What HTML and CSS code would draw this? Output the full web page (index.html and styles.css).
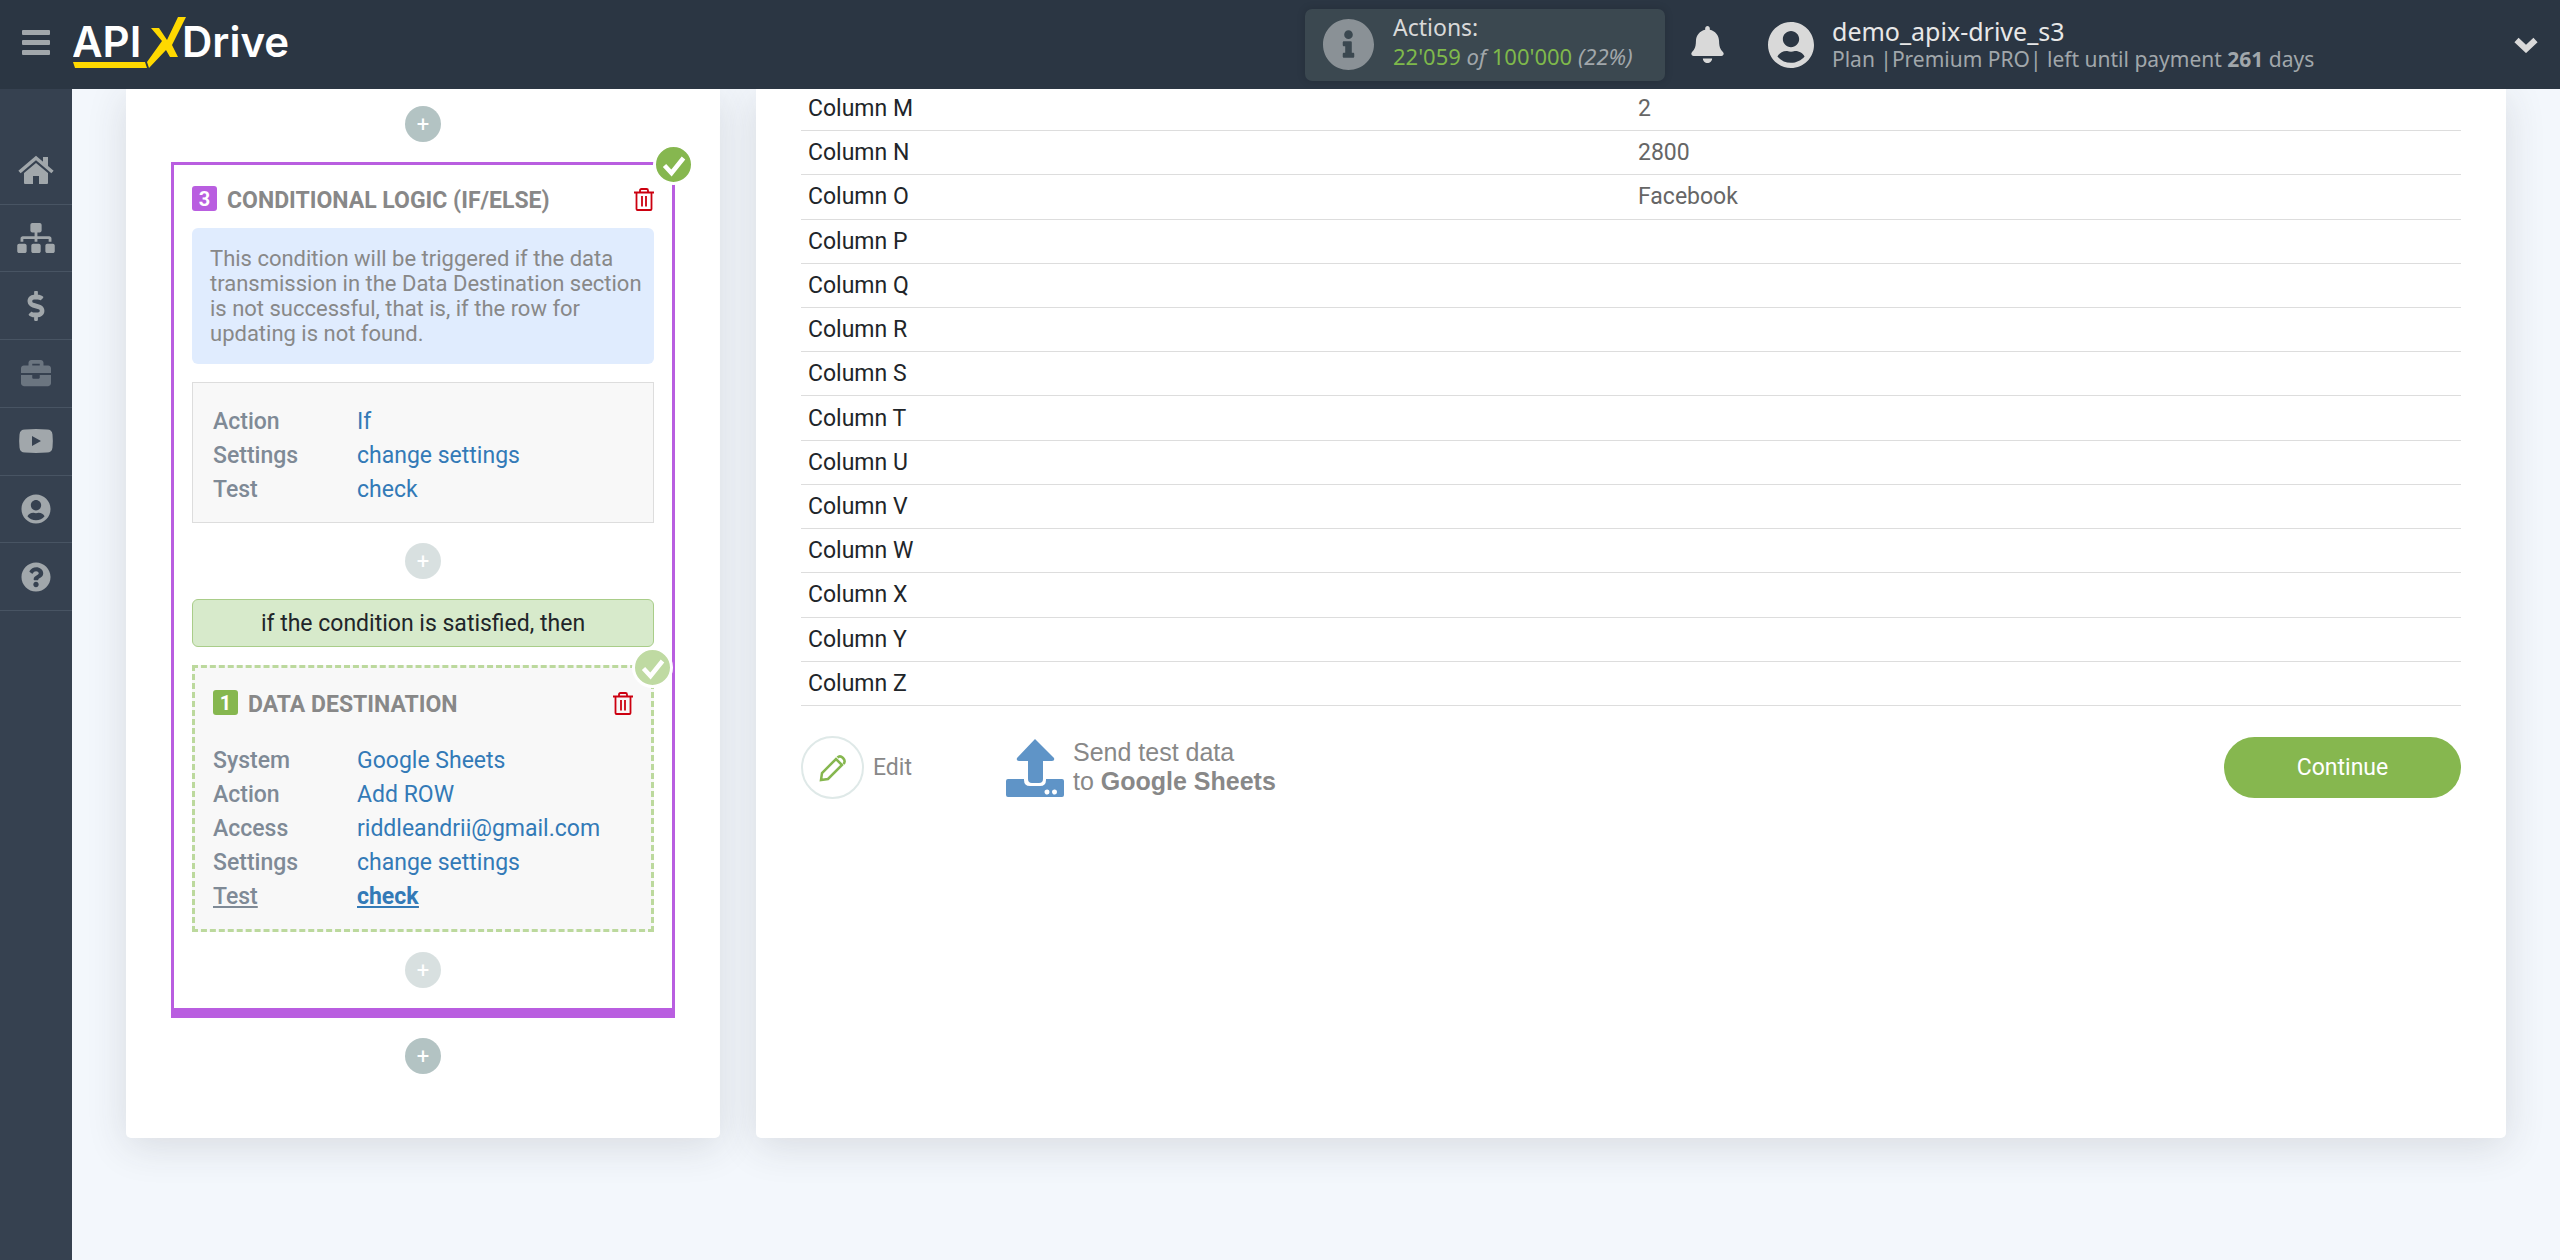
FILE: index.html
```html
<!DOCTYPE html>
<html lang="en">
<head>
<meta charset="utf-8">
<title>ApiX-Drive</title>
<link rel="stylesheet" href="styles.css">
</head>
<body>
<svg class="sprite" aria-hidden="true">
  <symbol id="i-check" viewBox="0 0 24 24"><path d="M2.500 12.500l7 7.500L21.500 5" fill="none" stroke="currentColor" stroke-width="4.500"/></symbol>
  <symbol id="i-trash" viewBox="0 0 20 24"><path d="M0 5.500h20M6 5V3.500q0-1.500 1.500-1.500h5q1.500 0 1.500 1.500V5M2.500 6v16q0 1 1 1h13q1 0 1-1V6M8 9v10.500M12 9v10.500" fill="none" stroke="currentColor" stroke-width="1.800"/></symbol>
  <symbol id="i-user" viewBox="0 0 496 512"><path d="M248 8C111 8 0 119 0 256s111 248 248 248 248-111 248-248S385 8 248 8zm0 96c48.600 0 88 39.400 88 88s-39.400 88-88 88-88-39.400-88-88 39.400-88 88-88zm0 344c-58.700 0-111.300-26.600-146.500-68.200 18.800-35.400 55.600-59.800 98.500-59.800 2.400 0 4.800.4 7.100 1.100 13 4.200 26.600 6.900 40.900 6.900 14.300 0 28-2.700 40.900-6.900 2.300-.7 4.700-1.100 7.100-1.100 42.900 0 79.700 24.400 98.500 59.800C359.300 421.400 306.700 448 248 448z"/></symbol>
</svg>

<header class="topbar">
  <button class="menu" aria-label="Menu"><span></span><span></span><span></span></button>
  <a class="logo" href="#" aria-label="ApiX-Drive">
    <svg viewBox="0 0 224 56" width="224" height="56">
      <text class="logo-text" x="-1" y="40">API</text>
      <text class="logo-text" x="109" y="40">Drive</text>
      <path class="logo-mark" d="M78 11h8l8 12L105 0h8L99 28l6 12h-8l-4-7L76 51l-2-6L89 24zM0 45h72l2 6H2z"/>
    </svg>
  </a>
  <div class="actions">
    <svg class="actions-icon" viewBox="8 8 496 496"><path d="M256 8C119 8 8 119 8 256s111 248 248 248 248-111 248-248S393 8 256 8zm0 110c23 0 42 19 42 42s-19 42-42 42-42-19-42-42 19-42 42-42zm56 254c0 7-5 12-12 12h-88c-7 0-12-5-12-12v-24c0-7 5-12 12-12h12v-64h-12c-7 0-12-5-12-12v-24c0-7 5-12 12-12h64c7 0 12 5 12 12v100h12c7 0 12 5 12 12z"/></svg>
    <div class="actions-body">
      <div class="actions-title">Actions:</div>
      <div class="actions-count"><b>22'059</b> <i>of</i> <b>100'000</b> <i>(22%)</i></div>
    </div>
  </div>
  <button class="bell" aria-label="Notifications">
    <svg viewBox="0 0 448 512"><path d="M224 512c35.320 0 63.970-28.650 63.970-64H160.030c0 35.350 28.650 64 63.970 64zm215.390-149.710c-19.320-20.760-55.470-51.990-55.470-154.290 0-77.700-54.480-139.900-127.940-155.160V32c0-17.670-14.320-32-31.980-32s-31.980 14.330-31.980 32v20.840C118.560 68.100 64.080 130.300 64.080 208c0 102.300-36.150 133.530-55.470 154.290-6 6.450-8.660 14.160-8.610 21.710.11 16.400 12.980 32 32.100 32h383.800c19.120 0 32-15.600 32.100-32 .05-7.550-2.610-15.270-8.610-21.710z"/></svg>
  </button>
  <div class="account">
    <svg><use href="#i-user"/></svg>
    <div>
      <div class="account-name">demo_apix-drive_s3</div>
      <div class="account-plan">Plan |Premium PRO| left until payment <b>261</b> days</div>
    </div>
  </div>
  <button class="expand" aria-label="Account menu">
    <svg viewBox="0 0 24 16"><path d="M2.500 3l9.500 9 9.500-9" fill="none" stroke="currentColor" stroke-width="6"/></svg>
  </button>
</header>

<div class="shell">
  <nav class="sidebar">
    <a href="#" aria-label="Home"><svg viewBox="0 0 36 28"><path d="M18 7l12 10v10q0 1-1 1h-8v-8h-6v8H7q-1 0-1-1V17z"/><path d="M1.500 16L18 2l16.500 14" fill="none" stroke="currentColor" stroke-width="3.500"/><path d="M25 1h5v11l-5-4z"/></svg></a>
    <a href="#" aria-label="Connections"><svg viewBox="0 0 640 512" class="wide"><path d="M128 352H32c-17.670 0-32 14.330-32 32v96c0 17.670 14.330 32 32 32h96c17.670 0 32-14.330 32-32v-96c0-17.670-14.330-32-32-32zm-24-80h192v48h48v-48h192v48h48v-57.590c0-21.170-17.230-38.410-38.410-38.410H344v-64h40c17.670 0 32-14.330 32-32V32c0-17.670-14.330-32-32-32H256c-17.670 0-32 14.330-32 32v96c0 17.670 14.330 32 32 32h40v64H94.410C73.230 224 56 241.230 56 262.410V320h48v-48zm264 80h-96c-17.670 0-32 14.330-32 32v96c0 17.670 14.330 32 32 32h96c17.670 0 32-14.330 32-32v-96c0-17.670-14.330-32-32-32zm240 0h-96c-17.670 0-32 14.330-32 32v96c0 17.670 14.330 32 32 32h96c17.670 0 32-14.330 32-32v-96c0-17.670-14.330-32-32-32z"/></svg></a>
    <a href="#" aria-label="Payments"><svg viewBox="0 0 288 512"><path d="M209.200 233.400l-108-31.600C88.700 198.200 80 186.500 80 173.500c0-16.300 13.200-29.500 29.500-29.500h66.300c12.200 0 24.200 3.700 34.200 10.500 6.100 4.100 14.300 3.100 19.500-2l34.800-34c7.100-6.900 6.100-18.400-1.800-24.500C238 74.800 207.400 64.100 176 64V16c0-8.800-7.200-16-16-16h-32c-8.800 0-16 7.200-16 16v48h-2.500C45.800 64-5.400 118.700.5 183.600c4.200 46.100 39.400 83.600 83.800 96.600l102.500 30c12.500 3.700 21.200 15.300 21.200 28.300 0 16.300-13.200 29.500-29.500 29.500h-66.300C100 368 88 364.300 78 357.500c-6.100-4.100-14.300-3.100-19.500 2l-34.800 34c-7.100 6.900-6.100 18.400 1.800 24.500 24.500 19.200 55.100 29.900 86.500 30v48c0 8.800 7.200 16 16 16h32c8.800 0 16-7.200 16-16v-48.200c46.600-.9 90.300-28.600 105.700-72.700 21.500-61.600-14.600-124.800-72.500-141.700z"/></svg></a>
    <a href="#" aria-label="Business" class="dim"><svg viewBox="0 0 512 512"><path d="M320 336c0 8.840-7.160 16-16 16h-96c-8.840 0-16-7.160-16-16v-48H0v144c0 25.600 22.400 48 48 48h416c25.600 0 48-22.400 48-48V288H320v48zm144-208h-80V80c0-25.600-22.400-48-48-48H176c-25.600 0-48 22.400-48 48v48H48c-25.600 0-48 22.400-48 48v80h512v-80c0-25.600-22.400-48-48-48zm-144 0H192V96h128v32z"/></svg></a>
    <a href="#" aria-label="Video"><svg viewBox="0 0 34 30"><path fill-rule="evenodd" d="M6 3.500q11-1 22 0 5 0 5.500 5 .7 6.500 0 13-.5 5-5.500 5-11 .8-22 0-5 0-5.500-5-.7-6.500 0-13 .5-5 5.500-5zM13 10v10l9-5z"/></svg></a>
    <a href="#" aria-label="Profile"><svg><use href="#i-user"/></svg></a>
    <a href="#" aria-label="Help"><svg viewBox="0 0 512 512"><path d="M504 256c0 136.997-111.043 248-248 248S8 392.997 8 256C8 119.083 119.043 8 256 8s248 111.083 248 248zM262.655 90c-54.497 0-89.255 22.957-116.549 63.758-3.536 5.286-2.353 12.415 2.715 16.258l34.699 26.310c5.205 3.947 12.621 3.008 16.665-2.122 17.864-22.658 30.113-35.797 57.303-35.797 20.429 0 45.698 13.148 45.698 32.958 0 14.976-12.363 22.667-32.534 33.976C247.128 238.528 216 254.941 216 296v4c0 6.627 5.373 12 12 12h56c6.627 0 12-5.373 12-12v-1.333c0-28.462 83.186-29.647 83.186-106.667 0-58.002-60.165-102-116.531-102zM256 338c-25.365 0-46 20.635-46 46 0 25.364 20.635 46 46 46s46-20.636 46-46c0-25.365-20.635-46-46-46z"/></svg></a>
  </nav>

  <main class="content">
    <section class="panel steps">
      <button class="add">+</button>
      <article class="logic">
        <span class="done"><svg><use href="#i-check"/></svg></span>
        <div class="step-head">
          <span class="num">3</span>
          <h2>CONDITIONAL LOGIC (IF/ELSE)</h2>
          <button class="trash" aria-label="Delete"><svg><use href="#i-trash"/></svg></button>
        </div>
        <p class="hint">This condition will be triggered if the data transmission in the Data Destination section is not successful, that is, if the row for updating is not found.</p>
        <dl class="props boxed">
          <dt>Action</dt><dd><a href="#">If</a></dd>
          <dt>Settings</dt><dd><a href="#">change settings</a></dd>
          <dt>Test</dt><dd><a href="#">check</a></dd>
        </dl>
        <button class="add faded">+</button>
        <div class="branch">if the condition is satisfied, then</div>
        <article class="destination">
          <span class="done pale"><svg><use href="#i-check"/></svg></span>
          <div class="step-head">
            <span class="num green">1</span>
            <h2>DATA DESTINATION</h2>
            <button class="trash" aria-label="Delete"><svg><use href="#i-trash"/></svg></button>
          </div>
          <dl class="props">
            <dt>System</dt><dd><a href="#">Google Sheets</a></dd>
            <dt>Action</dt><dd><a href="#">Add ROW</a></dd>
            <dt>Access</dt><dd><a href="#">riddleandrii@gmail.com</a></dd>
            <dt>Settings</dt><dd><a href="#">change settings</a></dd>
            <dt class="current">Test</dt><dd class="current"><a href="#">check</a></dd>
          </dl>
        </article>
        <button class="add faded">+</button>
      </article>
      <button class="add">+</button>
    </section>

    <section class="panel result">
      <table>
        <tbody>
          <tr><th scope="row">Column M</th><td>2</td></tr>
          <tr><th scope="row">Column N</th><td>2800</td></tr>
          <tr><th scope="row">Column O</th><td>Facebook</td></tr>
          <tr><th scope="row">Column P</th><td></td></tr>
          <tr><th scope="row">Column Q</th><td></td></tr>
          <tr><th scope="row">Column R</th><td></td></tr>
          <tr><th scope="row">Column S</th><td></td></tr>
          <tr><th scope="row">Column T</th><td></td></tr>
          <tr><th scope="row">Column U</th><td></td></tr>
          <tr><th scope="row">Column V</th><td></td></tr>
          <tr><th scope="row">Column W</th><td></td></tr>
          <tr><th scope="row">Column X</th><td></td></tr>
          <tr><th scope="row">Column Y</th><td></td></tr>
          <tr><th scope="row">Column Z</th><td></td></tr>
        </tbody>
      </table>
      <div class="buttons">
        <button class="edit">
          <span class="ring"><svg viewBox="0 0 28 28"><path d="M2 26l1-7L17 5l6 6L9 25zM18.500 3.500Q21 1 24 4t.5 6" fill="none" stroke="currentColor" stroke-width="2.500"/></svg></span>
          Edit
        </button>
        <button class="send">
          <svg viewBox="0 0 58 58"><path d="M29 0l19 19q1 3-2 3h-9v18q0 4-4 4h-7q-4 0-4-4V22h-9q-3 0-2-3z"/><path fill-rule="evenodd" d="M2 40h16v1q0 6 6 6h10q6 0 6-6v-1h16q2 0 2 2v14q0 2-2 2H2q-2 0-2-2V42q0-2 2-2zm39.500 10.500a2.500 2.500 0 1 0 .01 4.900 2.500 2.500 0 0 0 0-4.900zm7.500 0a2.500 2.500 0 1 0 .01 4.900 2.500 2.500 0 0 0 0-4.900z"/></svg>
          <span>Send test data<br>to <b>Google Sheets</b></span>
        </button>
        <button class="continue">Continue</button>
      </div>
    </section>
  </main>
</div>
</body>
</html>
```

FILE: styles.css
```css
* { box-sizing: border-box; }

body {
  margin: 0;
  min-height: 100vh;
  display: flex;
  flex-direction: column;
  background: #f3f7fc;
  color: #212529;
  font: 23px/34px Roboto, sans-serif;
}

button {
  padding: 0;
  border: 0;
  background: none;
  color: inherit;
  font: inherit;
  cursor: pointer;
}

svg { display: block; fill: currentColor; }
.sprite { position: absolute; width: 0; height: 0; }

/* Top bar */
.topbar {
  position: sticky;
  top: 0;
  z-index: 2;
  display: flex;
  align-items: center;
  height: 89px;
  padding: 0 22px;
  background: #2b3643;
  color: #d9d9d9;
  font-family: "Noto Sans", sans-serif;
}

.menu { display: grid; gap: 5px; width: 28px; margin: 0 23px 4px 0; }
.menu span { height: 5px; border-radius: 1px; background: #a1a7ab; }

.logo { margin-right: auto; }
.logo-text { fill: #fff; font: 600 42px Inter, sans-serif; }
.logo-mark { fill: #ffd900; }

.actions {
  display: flex;
  align-items: center;
  gap: 19px;
  width: 360px;
  height: 72px;
  padding: 0 18px;
  border-radius: 7px;
  background: #3b4850;
  box-shadow: 0 0 8px rgba(0, 0, 0, 0.15);
  font-size: 22px;
  line-height: 29px;
}
.actions-icon { width: 51px; height: 51px; color: #8a9196; }
.actions-body { padding-bottom: 6px; }
.actions-title { font-size: 23px; }
.actions-count { color: #a1a7ab; }
.actions-count b { color: #7fb94b; font-weight: 400; }

.bell { margin-left: 26px; }
.bell svg { width: 33px; height: 37px; }

.account { display: flex; align-items: center; gap: 18px; width: 555px; margin-left: 44px; white-space: nowrap; }
.account svg { width: 46px; height: 48px; }
.account-name { color: #e8e8e8; font-size: 25px; line-height: 28px; }
.account-plan { color: #a1a7ab; font-size: 21px; line-height: 28px; }

.expand { margin-left: 191px; }
.expand svg { width: 24px; height: 16px; }

/* Side navigation */
.shell {
  flex: 1;
  display: flex;
  background: linear-gradient(to right, #364150 72px, #f3f7fc 72px);
}

.sidebar {
  flex: none;
  display: grid;
  grid-template-rows: repeat(7, 1fr);
  width: 72px;
  height: 522px;
  padding-top: 48px;
  color: #a1a7ab;
}
.sidebar a {
  display: grid;
  place-items: center;
  border-bottom: 1px solid #485463;
  color: inherit;
}
.sidebar svg { width: 36px; height: 30px; }
.sidebar .wide { width: 40px; }
.sidebar .dim { color: #6b7580; }

/* Panels */
.content {
  flex: 1;
  display: grid;
  grid-template-columns: 594px 1fr;
  gap: 36px;
  align-self: start;
  padding: 0 54px;
}
.panel {
  border-radius: 0 0 5px 5px;
  background: #fff;
  box-shadow: 0 8px 40px rgba(50, 50, 60, 0.14);
}

.steps {
  display: flex;
  flex-direction: column;
  gap: 20px;
  padding: 17px 45px 64px;
}

.add {
  align-self: center;
  width: 36px;
  height: 36px;
  border-radius: 50%;
  background: #b3c3c3;
  color: #fff;
  font-size: 22px;
  line-height: 38px;
}
.add.faded { opacity: 0.5; }

.logic {
  position: relative;
  display: flex;
  flex-direction: column;
  padding: 21px 18px 20px;
  border: 3px solid #b95ee0;
  border-bottom-width: 10px;
}

.done {
  position: absolute;
  top: -21px;
  right: -22px;
  display: grid;
  place-items: center;
  width: 41px;
  height: 41px;
  border: 3px solid #fff;
  border-radius: 50%;
  background: #86b74f;
  color: #fff;
}
.done.pale { background: #bfdaa2; }
.done svg { width: 24px; height: 24px; }

.step-head { display: flex; gap: 10px; height: 25px; }
.num {
  width: 25px;
  height: 25px;
  border-radius: 3px;
  background: #b95ee0;
  color: #fff;
  font-size: 20px;
  font-weight: 700;
  line-height: 26px;
  text-align: center;
}
.num.green { background: #86b74f; }
h2 { margin: 0; color: #888; font-size: 23px; font-weight: 700; line-height: 30px; }
.trash { align-self: end; margin-left: auto; color: #cc0010; }
.trash svg { width: 20px; height: 24px; }

.hint {
  margin: 17px 0 18px;
  padding: 18px 10px 18px 18px;
  border-radius: 6px;
  background: #e0ecfe;
  color: #888;
  font-size: 22px;
  line-height: 25px;
}

.props {
  display: grid;
  grid-template-columns: 144px 1fr;
  margin: 0;
  padding: 29px 0 15px;
}
.props.boxed {
  margin-bottom: 20px;
  padding: 22px 20px 15px;
  border: 1px solid #ddd;
  background: #f8f8f8;
}
.props dt { color: #7f8a96; font-weight: 500; }
.props dd { margin: 0; }
.props a { color: #337ab7; text-decoration: none; }
.props .current, .props .current a { text-decoration: underline; }
.props dd.current { font-weight: 700; }

.branch {
  margin: 20px 0 18px;
  padding: 7px 6px 5px;
  border: 1px solid #a9cd89;
  border-radius: 6px;
  background: #d7eacb;
  text-align: center;
}

.destination {
  position: relative;
  margin-bottom: 20px;
  padding: 22px 18px 0;
  border: 3px dashed #bcd99d;
  background: #f8f8f8;
}

/* Result table */
.result { padding: 0 45px; }
table {
  width: 100%;
  height: 619px;
  margin-top: -2px;
  border-collapse: collapse;
  table-layout: fixed;
}
th, td {
  padding: 1px 7px 0;
  border-bottom: 1px solid #ddd;
  text-align: left;
  font-weight: 400;
}
th { width: 50%; }
td { color: #666; }

.buttons { display: flex; align-items: center; margin-top: 30px; color: #888; }
.edit { display: flex; align-items: center; gap: 9px; }
.ring {
  display: grid;
  place-items: center;
  width: 63px;
  height: 63px;
  border: 2px solid #dfe9e8;
  border-radius: 50%;
  color: #86b74f;
}
.ring svg { width: 28px; height: 28px; }
.send {
  display: flex;
  align-items: center;
  gap: 9px;
  margin-left: 94px;
  font: 25px/29px "Liberation Sans", sans-serif;
  text-align: left;
}
.send svg { width: 58px; height: 58px; color: #5f94c7; }
.send span { padding-bottom: 1px; }
.continue {
  width: 237px;
  height: 61px;
  margin-left: auto;
  border-radius: 31px;
  background: #86b74f;
  color: #fff;
}
```
